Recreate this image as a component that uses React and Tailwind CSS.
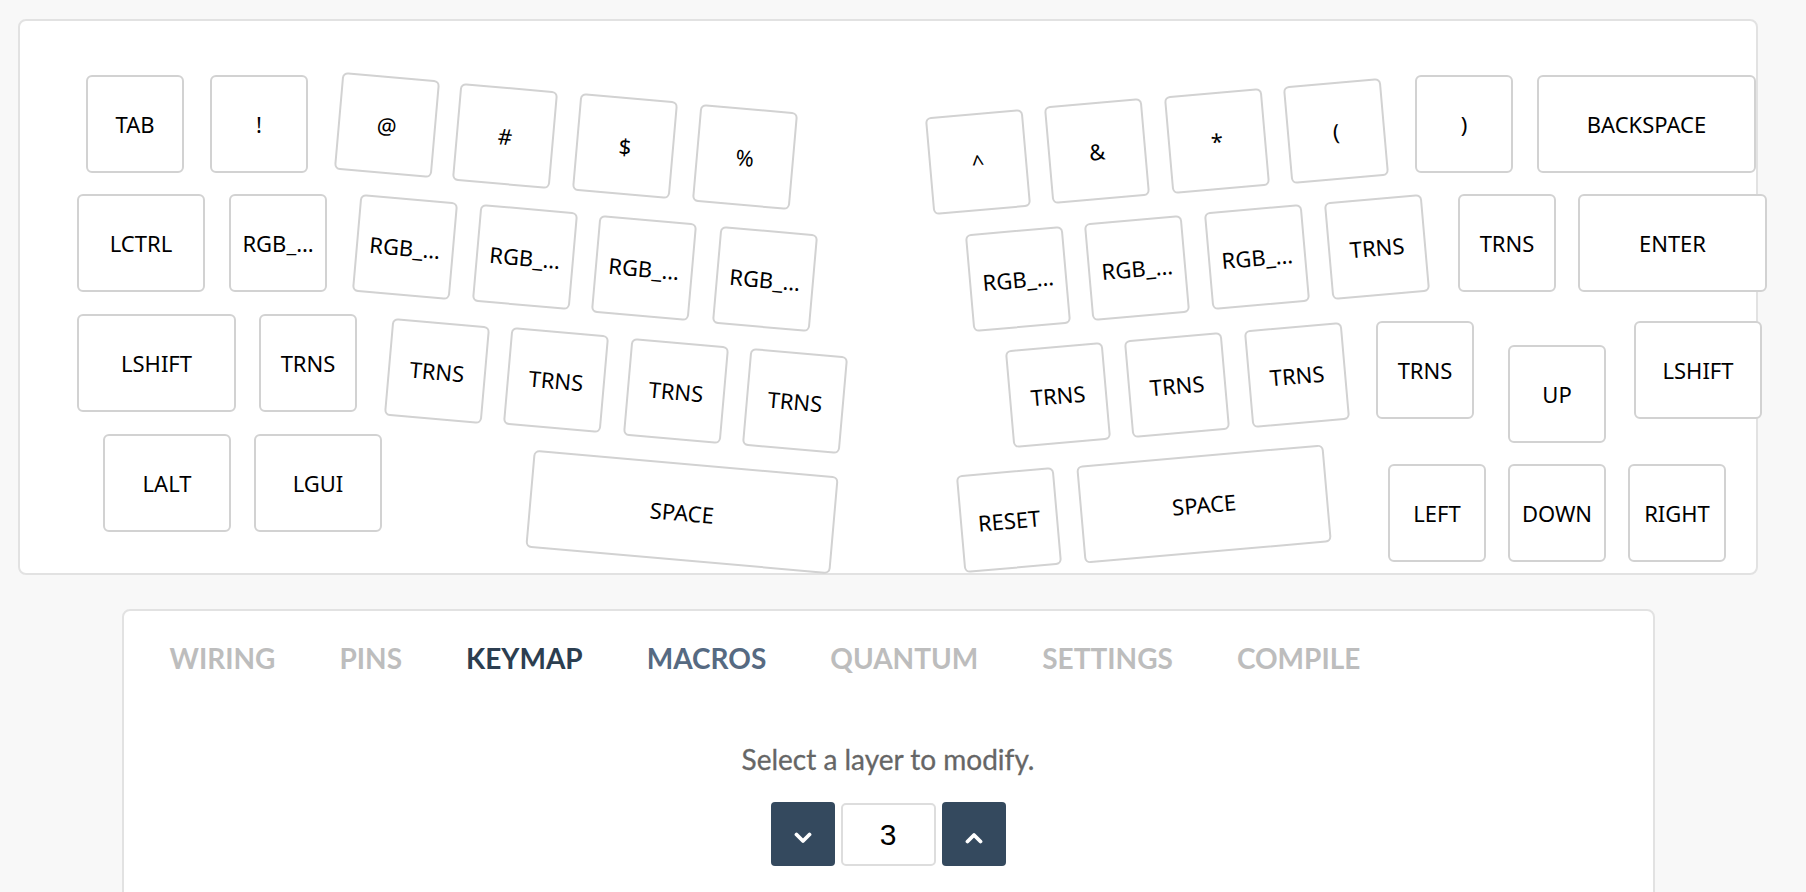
import React from "react";

const R = 5;
const keys = [
  ["TAB", 66, 54, 98, 0],
  ["!", 190, 54, 98, 0],
  ["@", 317.6, 54.7, 98, R],
  ["#", 436.4, 66, 98, R],
  ["$", 556.4, 76, 98, R],
  ["%", 675.5, 86.7, 98, R],
  ["^", 908.9, 91.9, 98, -R],
  ["&", 1027.8, 81.4, 98, -R],
  ["*", 1148.2, 71.2, 98, -R],
  ["(", 1267.2, 60.5, 98, -R],
  [")", 1395, 54, 98, 0],
  ["BACKSPACE", 1517, 54, 219, 0],

  ["LCTRL", 57, 173, 128, 0],
  ["RGB_…", 209, 173, 98, 0],
  ["RGB_…", 336, 177, 98, R],
  ["RGB_…", 456.2, 187.4, 98, R],
  ["RGB_…", 575.4, 197.8, 98, R],
  ["RGB_…", 695.8, 208.7, 98, R],
  ["RGB_…", 949.2, 209.3, 98, -R],
  ["RGB_…", 1068.4, 197.8, 98, -R],
  ["RGB_…", 1188.2, 186.8, 98, -R],
  ["TRNS", 1308, 176.5, 98, -R],
  ["TRNS", 1438, 173, 98, 0],
  ["ENTER", 1558, 173, 189, 0],

  ["LSHIFT", 57, 293, 159, 0],
  ["TRNS", 239, 293, 98, 0],
  ["TRNS", 368.1, 300.8, 98, R],
  ["TRNS", 486.9, 310.3, 98, R],
  ["TRNS", 607.3, 320.6, 98, R],
  ["TRNS", 726, 331.3, 98, R],
  ["TRNS", 988.6, 324.8, 98, -R],
  ["TRNS", 1108.2, 314.9, 98, -R],
  ["TRNS", 1228.4, 305, 98, -R],
  ["TRNS", 1356, 300, 98, 0],
  ["UP", 1488, 324, 98, 0],
  ["LSHIFT", 1614, 300, 128, 0],

  ["LALT", 83, 413, 128, 0],
  ["LGUI", 234, 413, 128, 0],
  ["SPACE", 508.5, 442.3, 306, R],
  ["RESET", 939.8, 450.3, 98, -R],
  ["SPACE", 1059.5, 433.7, 248, -R],
  ["LEFT", 1368, 443, 98, 0],
  ["DOWN", 1488, 443, 98, 0],
  ["RIGHT", 1608, 443, 98, 0],
];

const tabs = [
  ["WIRING", "text-[#bdbdbd]"],
  ["PINS", "text-[#bdbdbd]"],
  ["KEYMAP", "text-[#2c3e50]"],
  ["MACROS", "text-[#566a82]"],
  ["QUANTUM", "text-[#bdbdbd]"],
  ["SETTINGS", "text-[#bdbdbd]"],
  ["COMPILE", "text-[#bdbdbd]"],
];

function Chevron({ up }) {
  return (
    <svg width="18" height="12" viewBox="0 0 18 12" fill="none">
      <path
        d={up ? "M2.5 9.5 L9 3 L15.5 9.5" : "M2.5 2.5 L9 9 L15.5 2.5"}
        stroke="white"
        strokeWidth="3.8"
        strokeLinecap="round"
        strokeLinejoin="round"
      />
    </svg>
  );
}

export default function App() {
  return (
    <div className="w-[1806px] h-[892px] overflow-hidden bg-[#f8f8f8]">
      <div className="w-[1776px] px-[18px] pt-[19px]">
        <div className="relative h-[556px] w-full rounded-lg border-2 border-[#e2e2e2] bg-white">
          {keys.map(([label, left, top, width, rot], i) => (
            <div
              key={i}
              className="absolute flex h-[98px] items-center justify-center rounded-md border-2 border-[#d2d2d2] bg-white text-[22px] text-black [font-family:'Noto_Sans',sans-serif]"
              style={{ left, top, width, transform: rot ? `rotate(${rot}deg)` : undefined }}
            >
              {label}
            </div>
          ))}
        </div>

        <div className="mx-auto mt-[34px] h-[400px] w-[1533px] rounded-lg border-2 border-[#e2e2e2] bg-white [font-family:Lato,sans-serif]">
          <div className="flex pl-[14px] pt-[31px]">
            {tabs.map(([t, c]) => (
              <span key={t} className={`px-8 text-[28px] font-bold leading-[1.2] ${c}`}>
                {t}
              </span>
            ))}
          </div>
          <div className="mt-[67px] flex flex-col items-center">
            <p className="text-[28px] leading-[1.2] text-[#666666] [-webkit-text-stroke:0.3px_#666666]">
              Select a layer to modify.
            </p>
            <div className="mt-[26px] flex items-center gap-[6px]">
              <button className="flex h-[64px] w-[64px] items-center justify-center rounded-[4px] bg-[#34495e] pt-2">
                <Chevron />
              </button>
              <div className="flex h-[63px] w-[95px] items-center justify-center rounded-[5px] border-2 border-[#dddddd] bg-white text-[30px] text-black [font-family:'Liberation_Sans',Arial,sans-serif]">
                3
              </div>
              <button className="flex h-[64px] w-[64px] items-center justify-center rounded-[4px] bg-[#34495e] pt-2">
                <Chevron up />
              </button>
            </div>
          </div>
        </div>
      </div>
    </div>
  );
}
